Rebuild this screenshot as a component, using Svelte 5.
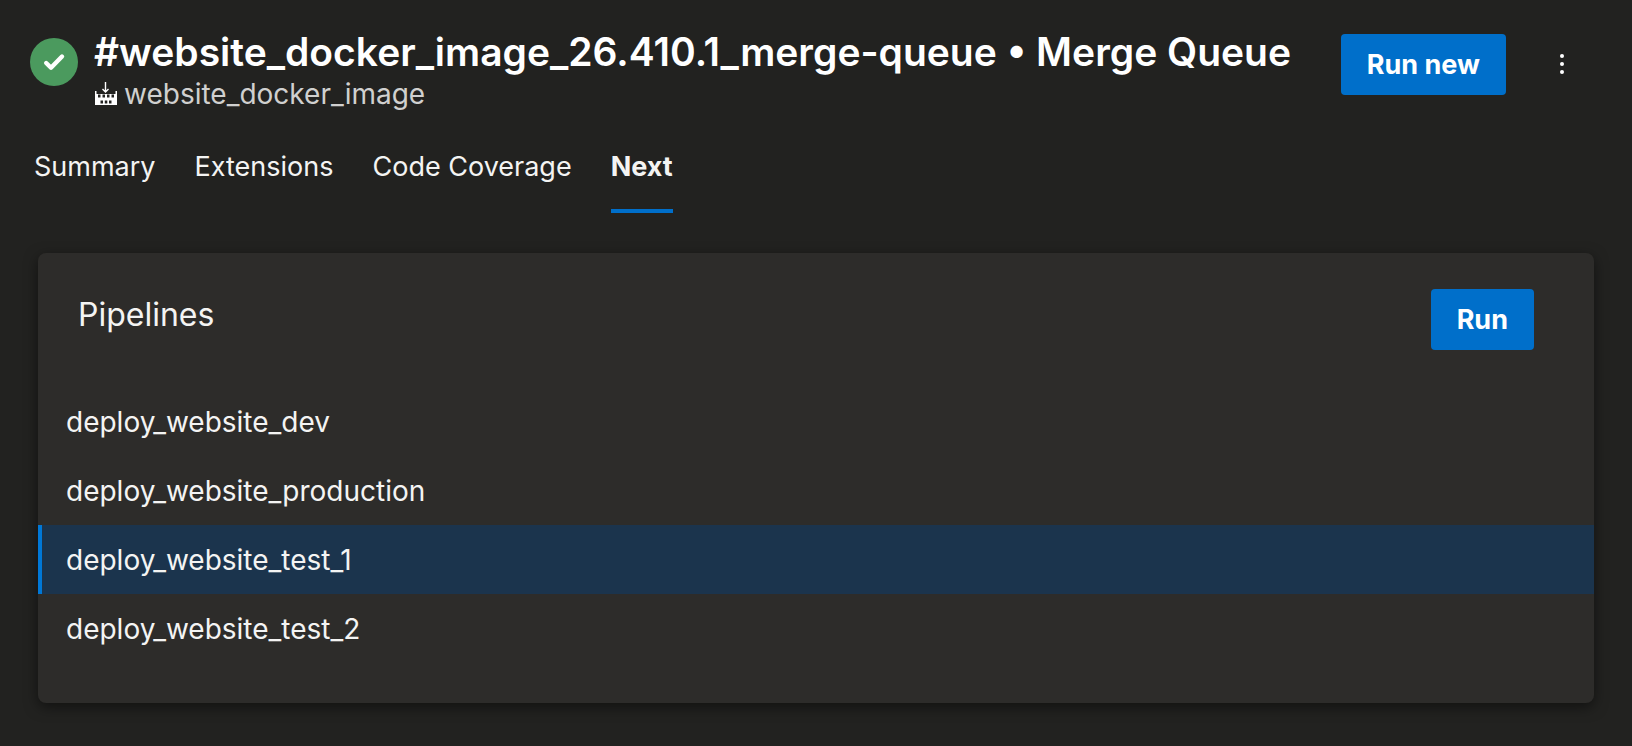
<script lang="ts">
	const tabs = ['Summary', 'Extensions', 'Code Coverage', 'Next'];
	const pipelines = [
		'deploy_website_dev',
		'deploy_website_production',
		'deploy_website_test_1',
		'deploy_website_test_2'
	];

	let activeTab = $state('Next');
	let selectedPipeline = $state('deploy_website_test_1');
</script>

<div class="page">
	<header class="page-header">
		<svg class="status" viewBox="0 0 48 48" role="img" aria-label="Success">
			<circle cx="24" cy="24" r="24" fill="#4b9a5e" />
			<path
				d="M16.2 25 L21 29.700 L32 18.500"
				fill="none"
				stroke="#fff"
				stroke-width="4.4"
				stroke-linecap="round"
				stroke-linejoin="round"
			/>
		</svg>
		<div class="titles">
			<h1>#website_docker_image_26.410.1_merge-queue • Merge Queue</h1>
			<a class="pipeline-link" href="#pipeline">
				<svg class="build-icon" viewBox="0 0 22 24" aria-hidden="true">
					<path
						fill="#fff"
						fill-rule="evenodd"
						d="M0 9h1.500v3H20.500V9H22v14H0zM3 12.500v3h2.500v-3zM7.500 12.500v3h2.500v-3zM12 12.500v3h2.500v-3zM16.500 12.500v3h2.500v-3zM5.500 18.500v3h2.500v-3zM9.800 18.500v3h2.500v-3zM14 18.500v3h2.500v-3z"
					/>
					<path d="M10.500 0v9.500M7.500 7l3 3 3-3" fill="none" stroke="#fff" stroke-width="1.400" />
				</svg>
				<span>website_docker_image</span>
			</a>
		</div>
		<div class="actions">
			<button class="primary">Run new</button>
			<button class="more" aria-label="More actions">
				<svg viewBox="0 0 4 20" aria-hidden="true">
					<circle cx="2" cy="2" r="2" />
					<circle cx="2" cy="10" r="2" />
					<circle cx="2" cy="18" r="2" />
				</svg>
			</button>
		</div>
	</header>

	<div class="tabs" role="tablist">
		{#each tabs as tab}
			<button
				class="tab"
				class:active={tab === activeTab}
				role="tab"
				aria-selected={tab === activeTab}
				onclick={() => (activeTab = tab)}>{tab}</button
			>
		{/each}
	</div>

	<section class="card">
		<div class="card-header">
			<h2>Pipelines</h2>
			<button class="primary">Run</button>
		</div>
		<ul class="pipeline-list">
			{#each pipelines as pipeline}
				<li>
					<button
						class="pipeline"
						class:selected={pipeline === selectedPipeline}
						aria-pressed={pipeline === selectedPipeline}
						onclick={() => (selectedPipeline = pipeline)}>{pipeline}</button
					>
				</li>
			{/each}
		</ul>
	</section>
</div>

<style>
	:global(body) {
		background-color: #222220;
	}

	.page {
		padding: 28px 38px 44px 30px;
		color: #f4f4f3;
		font-family: Inter, 'Liberation Sans', sans-serif;
		font-size: 27px;
		line-height: 36px;
	}

	button {
		border: none;
		background: none;
		color: inherit;
		font: inherit;
		cursor: pointer;
	}

	.page-header {
		display: flex;
		align-items: flex-start;
	}

	.status {
		flex: none;
		width: 48px;
		height: 48px;
		margin-top: 10px;
	}

	.titles {
		flex: 1;
		margin-left: 16px;
	}

	h1 {
		margin: 0;
		color: #fff;
		font-size: 39px;
		font-weight: 600;
		line-height: 48px;
		white-space: nowrap;
	}

	.pipeline-link {
		display: inline-flex;
		align-items: center;
		gap: 7px;
		margin-left: 1px;
		color: #d0d0cf;
		font-size: 28px;
		text-decoration: none;
	}

	.build-icon {
		width: 22px;
		height: 24px;
	}

	.actions {
		display: flex;
		gap: 24px;
		margin-top: 6px;
	}

	.primary {
		height: 61px;
		padding: 0 26px;
		border-radius: 4px;
		background-color: #006fca;
		color: #fff;
		font-weight: 700;
	}

	.more {
		display: flex;
		align-items: center;
		justify-content: center;
		width: 64px;
		height: 60px;
		padding: 0;
	}

	.more svg {
		width: 4px;
		height: 20px;
		fill: #fff;
	}

	.tabs {
		display: flex;
		gap: 39px;
		margin: 24px 0 40px 4px;
	}

	.tab {
		height: 74px;
		padding: 0 0 14px;
		border-bottom: 4px solid transparent;
	}

	.tab.active {
		border-color: #006fca;
		font-weight: 700;
	}

	.card {
		margin-left: 8px;
		padding-bottom: 40px;
		border-radius: 8px;
		background-color: #2d2c2a;
		box-shadow: 0 4px 14px rgba(0, 0, 0, 0.5);
	}

	.card-header {
		display: flex;
		justify-content: space-between;
		padding: 36px 60px 37px 40px;
	}

	h2 {
		margin: 4px 0 0;
		font-size: 32px;
		font-weight: 400;
		line-height: 44px;
	}

	.pipeline-list {
		margin: 0;
		padding: 0;
		list-style: none;
	}

	.pipeline {
		display: block;
		width: 100%;
		height: 69px;
		padding: 0 24px;
		border-left: 4px solid transparent;
		font-size: 28px;
		text-align: left;
	}

	.pipeline.selected {
		border-color: #0078d7;
		background-color: #1b344d;
	}
</style>
